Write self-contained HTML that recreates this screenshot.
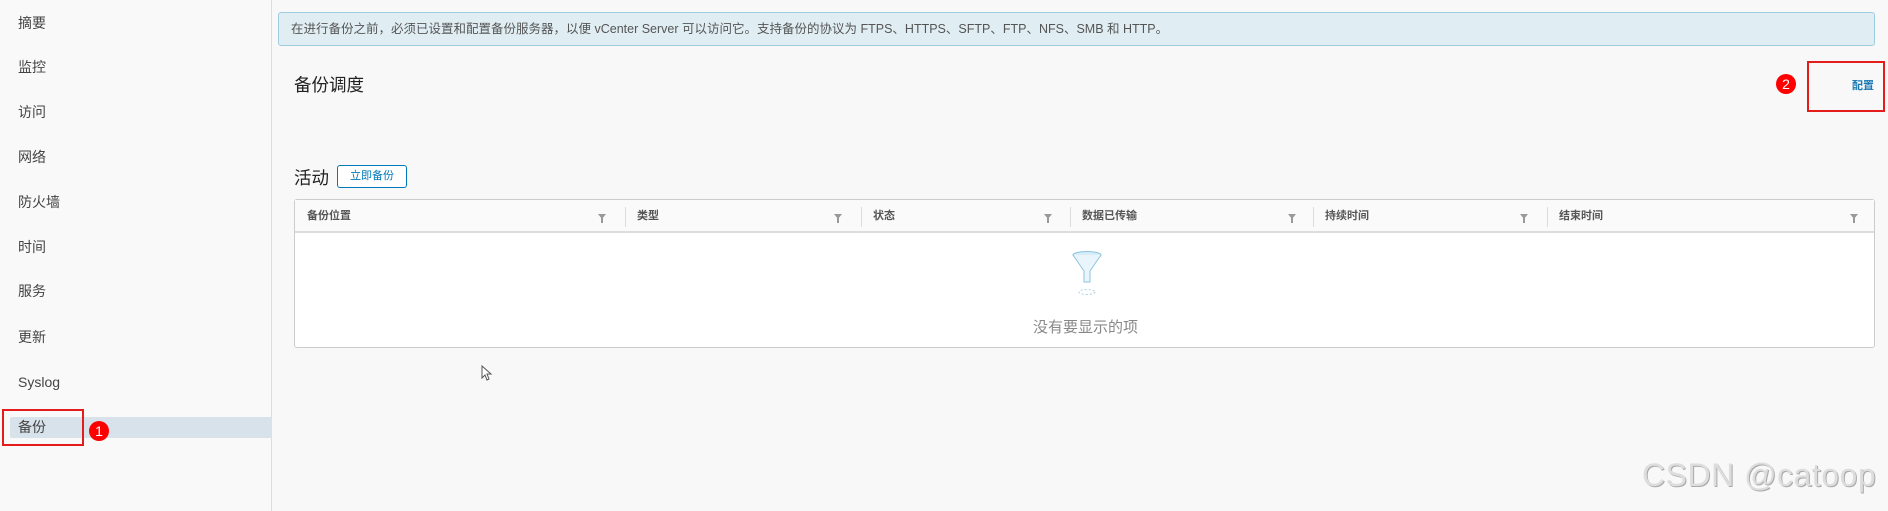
<!DOCTYPE html>
<html><head><meta charset="utf-8"><style>
*{margin:0;padding:0;box-sizing:border-box}
body{width:1888px;height:511px;overflow:hidden;background:#f8f8f8;font-family:"Liberation Sans","Noto Sans CJK SC",sans-serif;position:relative;color:#333}
.side{position:absolute;left:0;top:0;width:272px;height:511px;background:#f9f9f9;border-right:1px solid #ddd}
.it{position:absolute;left:18px;font-size:14px;color:#444;line-height:20px}
.sel{position:absolute;left:10px;top:417px;width:262px;height:21px;background:#d8e2ea;border-radius:2px 0 0 2px}
.abs{position:absolute}
.info{left:278px;top:12px;width:1597px;height:34px;background:#e0eef4;border:1px solid #9fcde0;border-radius:3px;font-size:12.5px;color:#555;line-height:32px;padding-left:12px}
.th{position:absolute;top:0;height:33px;line-height:33px;font-size:11px;color:#555;font-weight:bold}
.sep{position:absolute;top:7px;width:1px;height:20px;background:#ddd}
.fl{position:absolute;top:14px;width:0;height:0;border-left:4px solid transparent;border-right:4px solid transparent;border-top:5px solid #999}
.fl:after{content:"";position:absolute;left:-1px;top:-1px;width:2px;height:5px;background:#999}
.red{position:absolute;border:2px solid #e51c1c}
.dot{position:absolute;width:20px;height:20px;border-radius:50%;background:#f00;color:#fff;font-size:14px;text-align:center;line-height:20px}
</style></head><body>
<div class="side">
<div class="sel"></div>
<div class="it" style="top:13px">摘要</div>
<div class="it" style="top:57px">监控</div>
<div class="it" style="top:102px">访问</div>
<div class="it" style="top:147px">网络</div>
<div class="it" style="top:192px">防火墙</div>
<div class="it" style="top:237px">时间</div>
<div class="it" style="top:281px">服务</div>
<div class="it" style="top:327px">更新</div>
<div class="it" style="top:372px">Syslog</div>
<div class="it" style="top:417px">备份</div>
</div>
<div class="red" style="left:2px;top:409px;width:82px;height:37px"></div>
<div class="dot" style="left:89px;top:421px">1</div>

<div class="abs info">在进行备份之前，必须已设置和配置备份服务器，以便 vCenter Server 可以访问它。支持备份的协议为 FTPS、HTTPS、SFTP、FTP、NFS、SMB 和 HTTP。</div>
<div class="abs" style="left:294px;top:72px;font-size:17.5px;color:#222">备份调度</div>
<div class="abs" style="left:1852px;top:77px;font-size:11px;color:#1a7ab5;font-weight:bold">配置</div>
<div class="red" style="left:1807px;top:61px;width:78px;height:51px"></div>
<div class="dot" style="left:1776px;top:74px">2</div>

<div class="abs" style="left:294px;top:165px;font-size:17.5px;color:#222">活动</div>
<div class="abs" style="left:337px;top:165px;width:70px;height:23px;border:1px solid #0079b8;border-radius:3px;background:#fff;color:#0079b8;font-size:11px;text-align:center;line-height:21px">立即备份</div>

<div class="abs" style="left:294px;top:199px;width:1581px;height:149px;background:#fff;border:1px solid #ccc;border-radius:3px">
<div class="abs" style="left:0;top:0;width:100%;height:33px;background:#fafafa;border-bottom:2px solid #ddd"></div>
<div class="th" style="left:12px">备份位置</div><div class="fl" style="left:303px"></div>
<div class="sep" style="left:330px"></div>
<div class="th" style="left:342px">类型</div><div class="fl" style="left:539px"></div>
<div class="sep" style="left:566px"></div>
<div class="th" style="left:578px">状态</div><div class="fl" style="left:749px"></div>
<div class="sep" style="left:775px"></div>
<div class="th" style="left:787px">数据已传输</div><div class="fl" style="left:993px"></div>
<div class="sep" style="left:1018px"></div>
<div class="th" style="left:1030px">持续时间</div><div class="fl" style="left:1225px"></div>
<div class="sep" style="left:1252px"></div>
<div class="th" style="left:1264px">结束时间</div><div class="fl" style="left:1555px"></div>
<svg class="abs" style="left:767px;top:50px" width="50" height="50" viewBox="0 0 50 50">
<ellipse cx="25" cy="5" rx="14" ry="3.5" fill="#d6ecf7" stroke="#8cc4de" stroke-width="1"/>
<path d="M11 5 L22 21 L22 32 L28 32 L28 21 L39 5" fill="#eaf5fb" stroke="#8cc4de" stroke-width="1"/>
<ellipse cx="25" cy="42" rx="8" ry="2.5" fill="none" stroke="#a8d2e6" stroke-width="1" stroke-dasharray="2 2"/>
</svg>
<div class="abs" style="left:738px;top:116px;font-size:15px;color:#888">没有要显示的项</div>
</div>

<svg class="abs" style="left:481px;top:365px" width="12" height="16" viewBox="0 0 12 16"><path d="M1 1 L1 13 L4 10 L6 15 L8 14 L6 9 L10 9 Z" fill="#fff" stroke="#555" stroke-width="1"/></svg>

<div class="abs" style="left:1642px;top:457px;font-size:32px;color:#ddd;text-shadow:1px 1px 0 #aaa;letter-spacing:0.5px">CSDN @catoop</div>
</body></html>
